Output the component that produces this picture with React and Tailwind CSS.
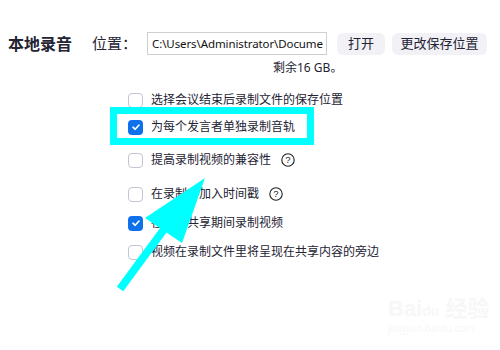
import React from "react";

const options = [
  { label: "选择会议结束后录制文件的保存位置", checked: false, mt: "mt-0" },
  { label: "为每个发言者单独录制音轨", checked: true, mt: "mt-[3px]" },
  { label: "提高录制视频的兼容性", checked: false, help: true, mt: "mt-[9px]" },
  { label: "在录制中加入时间戳", checked: false, help: true, mt: "mt-[10px]" },
  { label: "在屏幕共享期间录制视频", checked: true, mt: "mt-[5px]" },
  { label: "视频在录制文件里将呈现在共享内容的旁边", checked: false, mt: "mt-[5px]" },
];

const Box = ({ checked }) =>
  checked ? (
    <div className="w-[15px] h-[15px] rounded-[4px] bg-[#0e71eb] flex items-center justify-center shrink-0">
      <svg width="10" height="10" viewBox="0 0 10 10">
        <path d="M2 5.2 L4.2 7.3 L8 3" fill="none" stroke="white" strokeWidth="1.6" strokeLinecap="round" strokeLinejoin="round" />
      </svg>
    </div>
  ) : (
    <div className="w-[15px] h-[15px] rounded-[4px] border border-[#c4c4d2] bg-white shrink-0"></div>
  );

const Help = () => (
  <svg width="14" height="14" viewBox="0 0 14 14" className="ml-[10px]">
    <circle cx="7" cy="7" r="6.2" fill="none" stroke="#222" strokeWidth="1.1" />
    <text x="7" y="10.3" textAnchor="middle" fontSize="9.5" fill="#222" fontFamily="Liberation Sans, sans-serif">?</text>
  </svg>
);

const App = () => {
  return (
    <div
      className="relative w-[500px] h-[350px] bg-white overflow-hidden text-[#232333]"
      style={{ fontFamily: '"Noto Sans", "Noto Sans CJK SC", sans-serif' }}
    >
      <div className="pt-[32px] pl-[8px]">
        <div className="flex flex-row items-center h-[23px]">
          <div className="text-[16px] font-bold w-[84px]">本地录音</div>
          <div className="text-[15px] w-[55px]">位置：</div>
          <div className="w-[180px] h-[23px] border border-[#cfcfcf] flex items-center pl-[4px] overflow-hidden whitespace-nowrap text-[11.5px] tracking-[-0.1px] text-[#111]">
            {"C:\\Users\\Administrator\\Docume"}
          </div>
          <div className="ml-[10px] w-[48px] h-[22px] rounded-[6px] bg-[#f1f1f6] flex items-center justify-center text-[13px]">
            打开
          </div>
          <div className="ml-[7px] w-[95px] h-[22px] rounded-[6px] bg-[#f1f1f6] flex items-center justify-center text-[13px]">
            更改保存位置
          </div>
        </div>
        <div className="ml-[265px] mt-[4px] text-[12px] h-[18px] leading-[18px]">剩余16 GB。</div>
        <div className="ml-[120px] mt-[11px] flex flex-col">
          {options.map((o) => (
            <div key={o.label} className={`flex flex-row items-center h-[24px] ${o.mt}`}>
              <Box checked={o.checked} />
              <span className="ml-[8px] text-[12px] whitespace-nowrap">{o.label}</span>
              {o.help && <Help />}
            </div>
          ))}
        </div>
      </div>

      <div className="absolute left-[110px] top-[107px] w-[204px] h-[38px] border-[7px] border-[#00ffff]"></div>

      <svg className="absolute left-0 top-0" width="500" height="350" viewBox="0 0 500 350">
        <polygon points="205,178 145,218 182,243" fill="#00ffff" />
        <line x1="165" y1="228" x2="120" y2="289" stroke="#00ffff" strokeWidth="8" />
      </svg>

      <div className="absolute left-[388px] top-[298px] text-[#f7f7f7] leading-none select-none">
        <div className="text-[22px] font-bold" style={{ fontFamily: '"Liberation Sans", "Noto Sans CJK SC", sans-serif' }}>
          Bai<span className="text-[14px]">du</span> 经验
        </div>
        <div className="text-[10px] mt-[3px]">jingyan.baidu.com</div>
      </div>
    </div>
  );
};

export default App;
